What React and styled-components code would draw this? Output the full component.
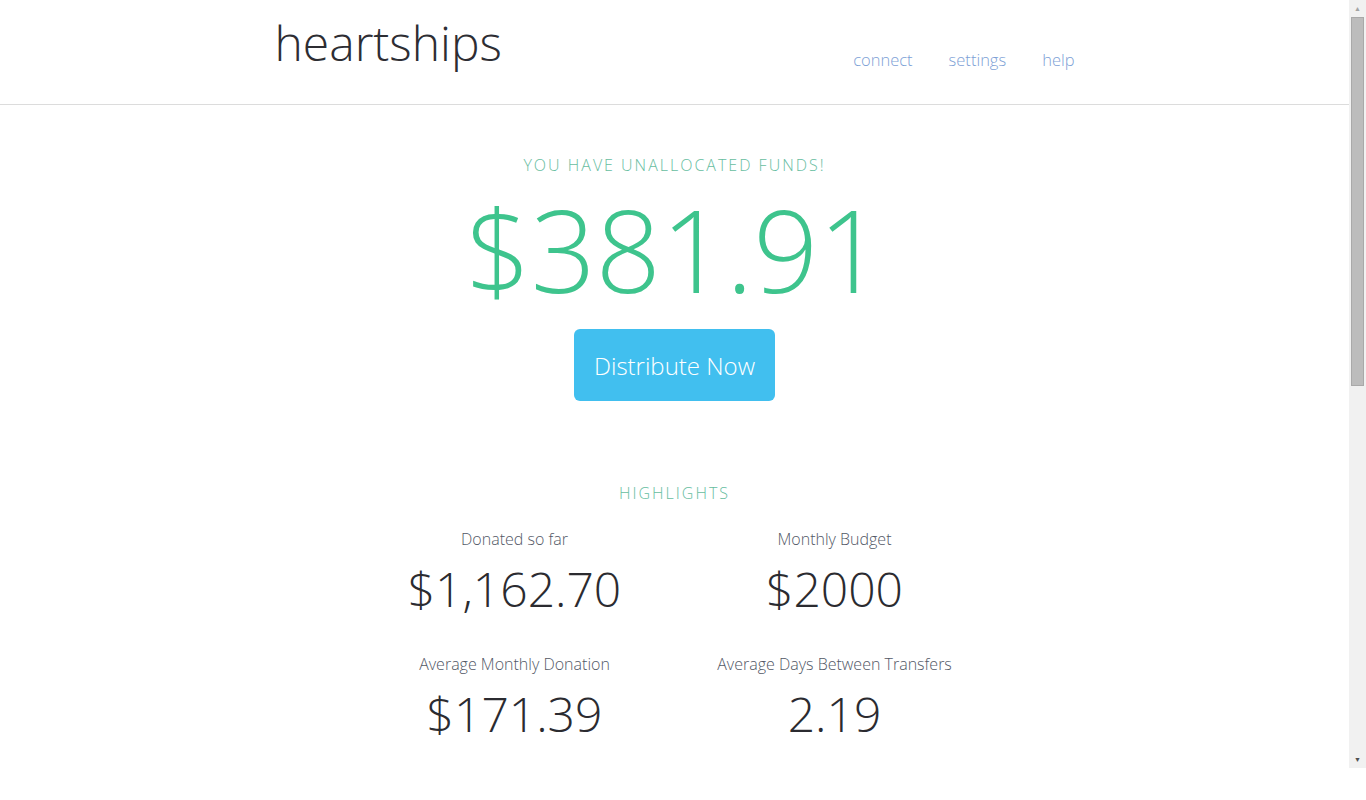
import React from "react";
import styled, { createGlobalStyle } from "styled-components";

const GlobalStyle = createGlobalStyle`
  body {
    margin: 0;
    background: #fff;
    font-family: "Open Sans", "Liberation Sans", sans-serif;
    font-weight: 300;
    color: #333;
  }
`;

const Shell = styled.div`
  display: flex;
  align-items: flex-start;
  height: 800px;
  overflow: hidden;
`;

const Page = styled.div`
  flex: 1;
  min-width: 0;
`;

const Header = styled.header`
  height: 104px;
  border-bottom: 1px solid #dcdcdc;
`;

const HeaderInner = styled.div`
  width: 800px;
  margin: 0 auto;
  display: flex;
  justify-content: space-between;
  align-items: flex-start;
`;

const Logo = styled.h1`
  margin: 19px 0 0;
  font-size: 48px;
  line-height: 48px;
  font-weight: 300;
  color: #2d2d33;
`;

const Nav = styled.nav`
  display: flex;
  gap: 36px;
  margin-top: 51px;
`;

const NavLink = styled.a`
  font-size: 16.5px;
  line-height: 17px;
  color: #7d9fd6;
  text-decoration: none;
  cursor: pointer;
`;

const Main = styled.main`
  display: flex;
  flex-direction: column;
  align-items: center;
`;

const Eyebrow = styled.div`
  margin-top: ${(p) => p.$top}px;
  font-size: 16px;
  line-height: 16px;
  letter-spacing: 2px;
  text-transform: uppercase;
  color: #67bd9f;
`;

const BigAmount = styled.div`
  margin-top: 19px;
  font-size: 114px;
  line-height: 114px;
  color: #3ec48d;
`;

const Button = styled.button`
  margin-top: 23px;
  width: 201px;
  height: 72px;
  border: none;
  border-radius: 6px;
  background: #41bfef;
  color: #fff;
  font-family: inherit;
  font-weight: 300;
  font-size: 24px;
  cursor: pointer;
`;

const Stats = styled.div`
  margin-top: 30px;
  display: grid;
  grid-template-columns: 320px 320px;
  row-gap: 43px;
`;

const Stat = styled.div`
  display: flex;
  flex-direction: column;
  align-items: center;
`;

const StatLabel = styled.div`
  font-size: 16px;
  line-height: 16px;
  color: #525866;
`;

const StatValue = styled.div`
  margin-top: 18px;
  font-size: 48px;
  line-height: 48px;
  color: #2b2b30;
`;

/* fake browser scrollbar, the reference shows one */
const ScrollTrack = styled.div`
  width: 17px;
  height: 768px;
  flex-shrink: 0;
  background: #f1f1f1;
  display: flex;
  flex-direction: column;
  align-items: center;
`;

const ScrollArrow = styled.div`
  height: 17px;
  width: 17px;
  display: flex;
  align-items: center;
  justify-content: center;
  color: ${(p) => (p.$dark ? "#505050" : "#a3a3a3")};
  font-size: 7px;
  line-height: 1;
`;

const ScrollThumb = styled.div`
  width: 13px;
  height: 369px;
  box-sizing: border-box;
  background: #bcbcbc;
  border: 1px solid #a9a9a9;
`;

const Spacer = styled.div`
  flex: 1;
`;

const stats = [
  { label: "Donated so far", value: "$1,162.70" },
  { label: "Monthly Budget", value: "$2000" },
  { label: "Average Monthly Donation", value: "$171.39" },
  { label: "Average Days Between Transfers", value: "2.19" },
];

const App = () => {
  return (
    <>
      <GlobalStyle />
      <Shell>
        <Page>
          <Header>
            <HeaderInner>
              <Logo>heartships</Logo>
              <Nav>
                <NavLink>connect</NavLink>
                <NavLink>settings</NavLink>
                <NavLink>help</NavLink>
              </Nav>
            </HeaderInner>
          </Header>
          <Main>
            <Eyebrow $top={52}>You have unallocated funds!</Eyebrow>
            <BigAmount>$381.91</BigAmount>
            <Button>Distribute Now</Button>
            <Eyebrow $top={84}>Highlights</Eyebrow>
            <Stats>
              {stats.map((s) => (
                <Stat key={s.label}>
                  <StatLabel>{s.label}</StatLabel>
                  <StatValue>{s.value}</StatValue>
                </Stat>
              ))}
            </Stats>
          </Main>
        </Page>
        <ScrollTrack>
          <ScrollArrow>▲</ScrollArrow>
          <ScrollThumb />
          <Spacer />
          <ScrollArrow $dark>▼</ScrollArrow>
        </ScrollTrack>
      </Shell>
    </>
  );
};

export default App;
